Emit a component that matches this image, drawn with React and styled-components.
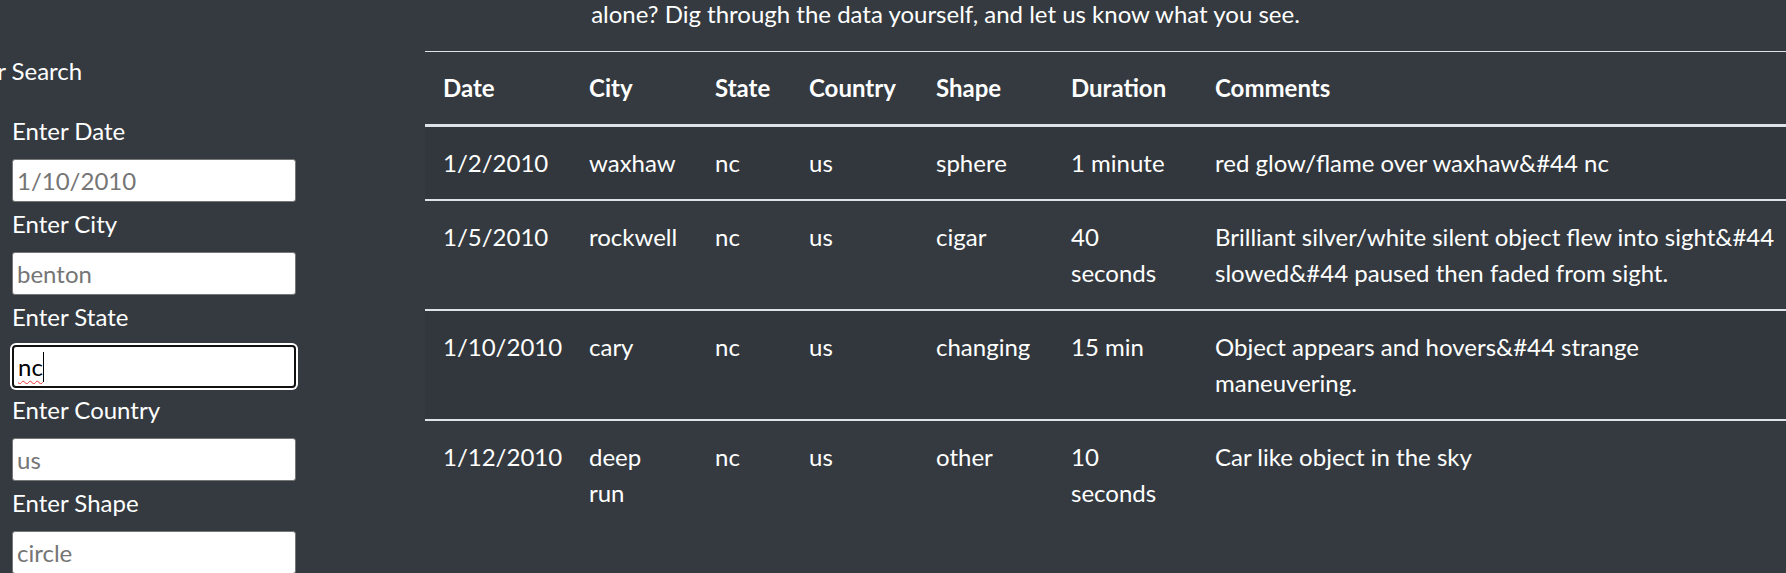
import React from 'react';
import styled, { createGlobalStyle, css } from 'styled-components';

const GlobalStyle = createGlobalStyle`
  html, body {
    margin: 0;
    padding: 0;
    background: #343a40;
    overflow: hidden;
  }
  body {
    color: #fff;
    font-family: Lato, "Open Sans", sans-serif;
    font-size: 24px;
    line-height: 1.5;
  }
`;

const sightings = [
  {
    date: '1/2/2010',
    city: 'waxhaw',
    state: 'nc',
    country: 'us',
    shape: 'sphere',
    duration: '1 minute',
    comments: 'red glow/flame over waxhaw&#44 nc',
  },
  {
    date: '1/5/2010',
    city: 'rockwell',
    state: 'nc',
    country: 'us',
    shape: 'cigar',
    duration: '40 seconds',
    comments:
      'Brilliant silver/white silent object flew into sight&#44 slowed&#44 paused then faded from sight.',
  },
  {
    date: '1/10/2010',
    city: 'cary',
    state: 'nc',
    country: 'us',
    shape: 'changing',
    duration: '15 min',
    comments: 'Object appears and hovers&#44 strange maneuvering.',
  },
  {
    date: '1/12/2010',
    city: 'deep run',
    state: 'nc',
    country: 'us',
    shape: 'other',
    duration: '10 seconds',
    comments: 'Car like object in the sky',
  },
];

const columns = [
  { key: 'date', label: 'Date', width: 146 },
  { key: 'city', label: 'City', width: 126 },
  { key: 'state', label: 'State', width: 94 },
  { key: 'country', label: 'Country', width: 127 },
  { key: 'shape', label: 'Shape', width: 135 },
  { key: 'duration', label: 'Duration', width: 144 },
  { key: 'comments', label: 'Comments' },
];

const filters = [
  { id: 'datetime', label: 'Enter Date', placeholder: '1/10/2010' },
  { id: 'city', label: 'Enter City', placeholder: 'benton' },
  { id: 'state', label: 'Enter State', value: 'nc', focused: true },
  { id: 'country', label: 'Enter Country', placeholder: 'us' },
  { id: 'shape', label: 'Enter Shape', placeholder: 'circle' },
];

const App = () => {
  return (
    <>
      <GlobalStyle />
      <Page>
        <Sidebar>
          <SidebarTitle>Filter Search</SidebarTitle>
          <FilterList>
            {filters.map((f) => (
              <FilterItem key={f.id}>
                <Label htmlFor={f.id}>{f.label}</Label>
                {f.focused ? (
                  <FocusedField id={f.id}>
                    <Typed>{f.value}</Typed>
                    <Caret />
                  </FocusedField>
                ) : (
                  <Field id={f.id} type="text" placeholder={f.placeholder} />
                )}
              </FilterItem>
            ))}
          </FilterList>
        </Sidebar>
        <Main>
          <Intro>alone? Dig through the data yourself, and let us know what you see.</Intro>
          <Table>
            <colgroup>
              {columns.map((c) => (
                <col key={c.key} style={c.width ? { width: c.width } : undefined} />
              ))}
            </colgroup>
            <thead>
              <tr>
                {columns.map((c) => (
                  <HeadCell key={c.key}>{c.label}</HeadCell>
                ))}
              </tr>
            </thead>
            <tbody>
              {sightings.map((s, i) => (
                <Row key={s.date} $striped={i % 2 === 0}>
                  {columns.map((c) => (
                    <Cell key={c.key}>{s[c.key]}</Cell>
                  ))}
                </Row>
              ))}
            </tbody>
          </Table>
        </Main>
      </Page>
    </>
  );
};

const Page = styled.div`
  display: flex;
  align-items: flex-start;
  width: 1786px;
  height: 573px;
  overflow: hidden;
`;

const Sidebar = styled.aside`
  flex: 0 0 425px;
  box-sizing: border-box;
  padding: 53px 0 0 12px;
`;

const SidebarTitle = styled.div`
  margin-left: -61px;
  line-height: 36px;
  margin-bottom: 24px;
  white-space: nowrap;
`;

const FilterList = styled.ul`
  list-style: none;
  margin: 0;
  padding: 0;
`;

const FilterItem = styled.li`
  display: flex;
  flex-direction: column;
  align-items: flex-start;
  margin-bottom: 4px;
`;

const Label = styled.label`
  display: block;
  line-height: 36px;
  margin-bottom: 10px;
`;

const fieldBox = css`
  box-sizing: border-box;
  width: 284px;
  height: 43px;
  background: #fff;
  border-radius: 3px;
  font-family: Lato, "Open Sans", sans-serif;
  font-size: 24px;
`;

const Field = styled.input`
  ${fieldBox};
  border: 1px solid #767676;
  padding: 0 0 0 4px;
  color: #000;
  outline: none;

  &::placeholder {
    color: #757575;
  }
`;

const FocusedField = styled.div`
  ${fieldBox};
  display: flex;
  align-items: center;
  border: 2px solid #111;
  border-radius: 4px;
  box-shadow: 0 0 0 2px #fff;
  padding-left: 4px;
  color: #000;
`;

const Typed = styled.span`
  text-decoration: underline wavy #e33;
  text-decoration-thickness: 1px;
  text-underline-offset: 4px;
`;

const Caret = styled.span`
  display: inline-block;
  width: 1px;
  height: 30px;
  background: #000;
`;

const Main = styled.main`
  flex: 1;
  min-width: 0;
`;

const Intro = styled.p`
  margin: -4px 0 19px;
  padding-right: 320px;
  line-height: 36px;
  text-align: center;
  white-space: nowrap;
`;

const Table = styled.table`
  width: calc(100% + 12px);
  table-layout: fixed;
  border-collapse: collapse;
  color: #fff;
`;

const HeadCell = styled.th`
  padding: 18px;
  text-align: left;
  vertical-align: bottom;
  font-weight: 700;
  border-top: 1px solid #dee2e6;
  border-bottom: 3px solid #dee2e6;
`;

const Row = styled.tr`
  background: ${({ $striped }) => ($striped ? 'rgba(0, 0, 0, 0.05)' : 'transparent')};
`;

const Cell = styled.td`
  padding: 18px;
  vertical-align: top;
  border-top: 2px solid #dee2e6;
`;

export default App;
